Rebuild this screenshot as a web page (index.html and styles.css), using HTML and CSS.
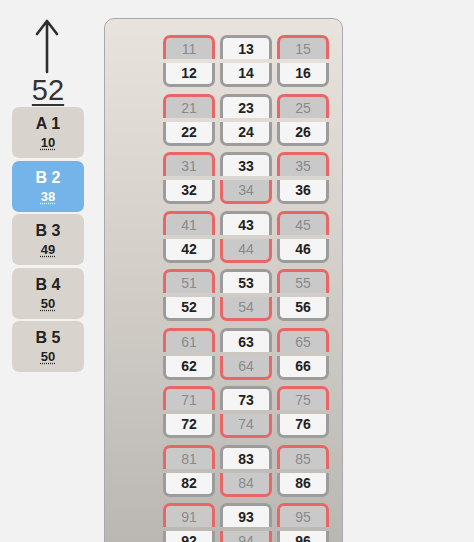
FILE: index.html
```html
<!DOCTYPE html>
<html lang="en">
<head>
    <meta charset="UTF-8">
    <meta name="viewport" content="width=device-width, initial-scale=1.0">
    <title>Seat map</title>
    <link rel="stylesheet" href="styles.css">
</head>
<body>
    <div class="page">
        <div class="side">
            <div class="direction">
                <svg width="72" height="56" viewBox="0 0 72 56">
                    <path d="M35 54 V4 M25 16 L35 3 L45 16" fill="none" stroke="#2e2e2e" stroke-width="2.6" stroke-linecap="round" stroke-linejoin="round"/>
                </svg>
                <div class="total">52</div>
            </div>
            <div class="cars">
                <div class="car"><b>A 1</b><abbr>10</abbr></div>
                <div class="car active"><b>B 2</b><abbr>38</abbr></div>
                <div class="car"><b>B 3</b><abbr>49</abbr></div>
                <div class="car"><b>B 4</b><abbr>50</abbr></div>
                <div class="car"><b>B 5</b><abbr>50</abbr></div>
            </div>
        </div>
        <div class="coach" id="coach"></div>
    </div>

    <script>
        var coach = document.getElementById("coach");
        for (var r = 1; r <= 9; r++) {
            var pair = document.createElement("div");
            pair.className = "pair";
            var upper = "", lower = "";
            for (var c = 0; c < 3; c++) {
                var up = r * 10 + 1 + c * 2;
                var down = up + 1;
                var upTaken = c !== 1;
                var downTaken = c === 1 && r >= 3;
                upper += '<div class="seat up' + (upTaken ? ' taken' : '') + '">' + up + '</div>';
                lower += '<div class="seat down' + (downTaken ? ' taken' : '') + '">' + down + '</div>';
            }
            pair.innerHTML = '<div class="row">' + upper + '</div><div class="row">' + lower + '</div>';
            coach.appendChild(pair);
        }
    </script>
</body>
</html>
```

FILE: styles.css
```css
html, body {
    overflow: hidden;
}
body {
    font-family: 'Liberation Sans', Arial, sans-serif;
    background-color: #f2f2f2;
    color: #222;
    margin: 0;
    padding: 0;
}
.page {
    display: flex;
    align-items: flex-start;
    padding-top: 18px;
}
.side {
    width: 72px;
    margin-left: 12px;
}
.direction {
    display: flex;
    flex-direction: column;
    align-items: center;
}
.direction svg {
    display: block;
}
.total {
    font-size: 29px;
    line-height: 32px;
    color: #333;
    text-decoration: underline;
    text-decoration-thickness: 2px;
    text-underline-offset: 4px;
}
.cars {
    margin-top: 1px;
    display: flex;
    flex-direction: column;
    gap: 2.5px;
}
.car {
    height: 51px;
    border-radius: 7px;
    background-color: #d8d4cd;
    display: flex;
    flex-direction: column;
    align-items: center;
    justify-content: center;
    gap: 4px;
    color: #222;
}
.car b {
    font-size: 16px;
    line-height: 17px;
}
.car abbr {
    font-size: 13px;
    font-weight: bold;
    line-height: 14px;
    text-decoration: underline dotted;
    text-underline-offset: 2px;
}
.car.active {
    background-color: #74b4e8;
    color: #fff;
}
.coach {
    margin-left: 20px;
    width: 239px;
    height: 560px;
    border: 1px solid #a9a9a9;
    border-radius: 10px;
    background: linear-gradient(to bottom, #e9e3dd, #b9b6b1 540px, #b0aeaa);
    padding: 16px 0 0 58px;
    box-sizing: border-box;
}
.pair {
    display: flex;
    flex-direction: column;
    gap: 4px;
    margin-bottom: 6.5px;
}
.row {
    display: flex;
    gap: 5px;
}
.seat {
    width: 52px;
    height: 24px;
    box-sizing: border-box;
    border: 3px solid #9c9c9c;
    background-color: #f5f5f5;
    font-size: 14px;
    font-weight: bold;
    color: #222;
    display: flex;
    align-items: center;
    justify-content: center;
}
.seat.up {
    border-bottom: 0;
    border-radius: 7px 7px 0 0;
    padding-top: 1px;
}
.seat.down {
    border-top: 0;
    border-radius: 0 0 7px 7px;
    padding-bottom: 1px;
}
.seat.taken {
    border-color: #e86666;
    background-color: #c9c9c9;
    color: #8a8a8a;
    font-weight: normal;
}
```
